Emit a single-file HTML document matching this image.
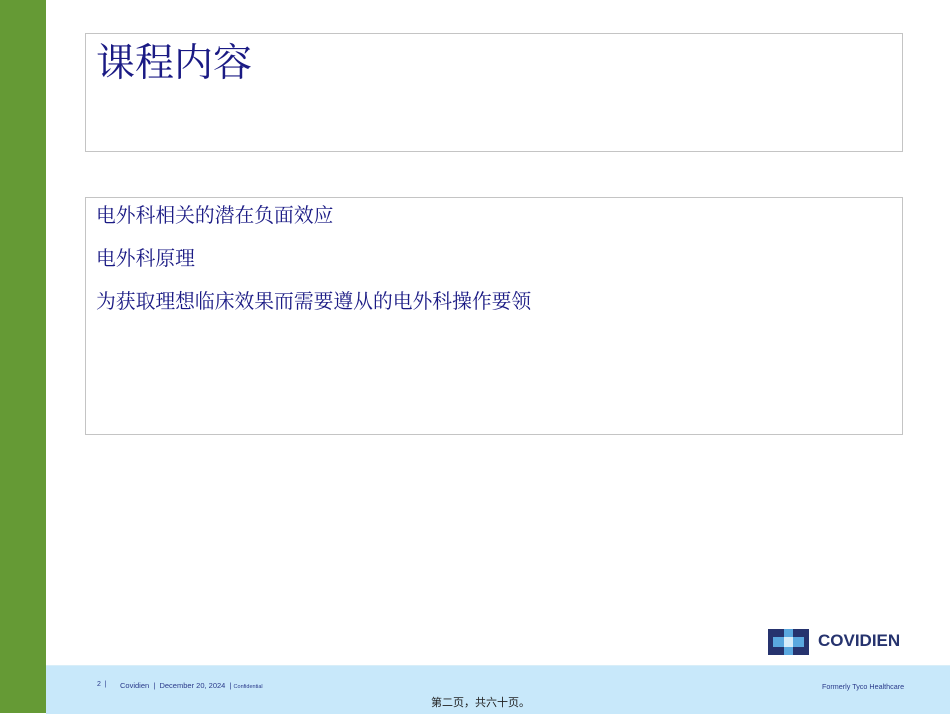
<!DOCTYPE html>
<html><head><meta charset="utf-8"><style>
body{margin:0;width:950px;height:713px;position:relative;overflow:hidden;background:#fff;font-family:"Liberation Serif","Noto Serif CJK SC",serif;}
.green{position:absolute;left:0;top:0;width:46px;height:713px;background:#659a35;}
.box{position:absolute;border:1px solid #c4c4c4;box-sizing:border-box;}
.t{position:absolute;color:#1a1a84;white-space:nowrap;}
.foot{position:absolute;left:46px;top:665px;width:904px;height:48px;background:#c8e8fa;border-top:1px solid #d8eef8;}
.f{position:absolute;font-family:"Liberation Sans",sans-serif;color:#2a3a8a;white-space:nowrap;}
</style></head><body>
<div class="green"></div>
<div class="box" style="left:85px;top:33px;width:818px;height:119px"></div>
<div class="t" style="left:96px;top:39px;font-size:39px;line-height:50px">课程内容</div>
<div class="box" style="left:85px;top:197px;width:818px;height:238px"></div>
<div class="t" style="left:96px;top:203px;font-size:19.8px;line-height:26px">电外科相关的潜在负面效应</div>
<div class="t" style="left:96px;top:246px;font-size:19.8px;line-height:26px">电外科原理</div>
<div class="t" style="left:96px;top:289px;font-size:19.8px;line-height:26px">为获取理想临床效果而需要遵从的电外科操作要领</div>
<svg style="position:absolute;left:768px;top:629px" width="41" height="26" viewBox="0 0 41 26">
<rect width="41" height="26" fill="#26336e"/>
<rect x="16" y="0" width="9" height="26" fill="#5aa8df"/>
<rect x="5" y="8" width="31" height="10" fill="#5aa8df"/>
<rect x="16" y="8" width="9" height="10" fill="#d7ecf9"/>
</svg>
<div class="f" style="left:818px;top:631px;font-size:17px;font-weight:bold;color:#26336e;line-height:20px">COVIDIEN</div>
<div class="foot"></div>
<div class="f" style="left:97px;top:681px;font-size:7px">2 &nbsp;|</div>
<div class="f" style="left:120px;top:681px;font-size:7.5px">Covidien &nbsp;| &nbsp;December 20, 2024 &nbsp;| <span style="font-size:5.5px">Confidential</span></div>
<div class="f" style="left:822px;top:682px;font-size:7.2px">Formerly Tyco Healthcare</div>
<div class="f" style="left:431px;top:694px;font-size:11px;color:#222;font-family:'Liberation Sans','Noto Sans CJK SC',sans-serif">第二页，共六十页。</div>
</body></html>
